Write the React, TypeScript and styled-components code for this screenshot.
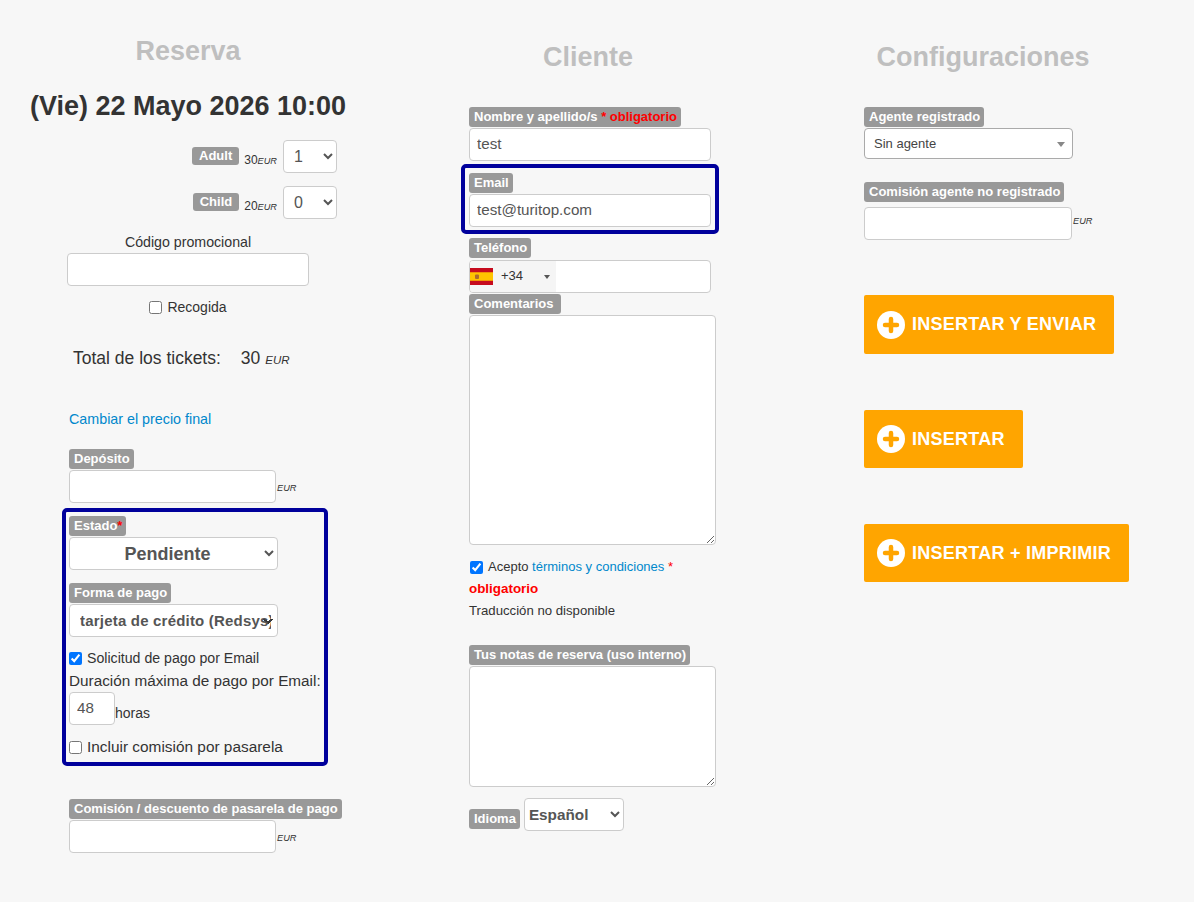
import React from "react"
import styled, { createGlobalStyle } from "styled-components"

const GlobalStyle = createGlobalStyle`
  html, body {
    margin: 0;
    background: #f7f7f7;
    color: #333;
    font-family: "Liberation Sans", Arial, sans-serif;
    font-size: 14px;
  }
  * {
    box-sizing: border-box;
  }
`

const Page = styled.div`
  display: grid;
  grid-template-columns: 400px 395px 376px;
  width: 1194px;
  height: 902px;
  overflow: hidden;
`

const Column = styled.section<{ $top: number }>`
  display: flex;
  flex-direction: column;
  align-items: flex-start;
  padding: ${(p) => p.$top}px 0 0 69px;
  width: 376px;
`

const Title = styled.h2`
  align-self: stretch;
  margin: 0 0 0 -69px;
  font-size: 27px;
  line-height: 31px;
  font-weight: 700;
  text-align: center;
  color: #bfbfbf;
`

const DateTitle = styled.h1`
  align-self: stretch;
  margin: 24px 0 0 -69px;
  font-size: 27px;
  line-height: 31px;
  font-weight: 700;
  text-align: center;
  color: #333;
`

const Label = styled.label<{ $mt?: number; $mb?: number }>`
  display: inline-block;
  margin-top: ${(p) => p.$mt ?? 0}px;
  margin-bottom: ${(p) => p.$mb ?? 0}px;
  padding: 0 4px 0 5px;
  height: 20px;
  line-height: 19px;
  font-size: 13px;
  font-weight: 700;
  white-space: nowrap;
  color: #fff;
  background: #999;
  border-radius: 3px;
`

const Required = styled.span`
  color: #f00;
`

const TextInput = styled.input<{ $w?: number; $mt?: number }>`
  display: block;
  flex: none;
  width: ${(p) => p.$w ?? 242}px;
  height: 33px;
  margin: ${(p) => p.$mt ?? 1}px 0 0;
  padding: 0 7px 2px;
  font-family: inherit;
  font-size: 15.2px;
  color: #555;
  background: #fff;
  border: 1px solid #ccc;
  border-radius: 4px;
  outline: none;
`

const Select = styled.select<{ $w: number; $size?: number; $center?: boolean; $pad?: number }>`
  display: block;
  flex: none;
  width: ${(p) => p.$w}px;
  height: 33px;
  padding: 0 4px 0 ${(p) => p.$pad ?? 4}px;
  font-family: inherit;
  font-size: ${(p) => p.$size ?? 16}px;
  font-weight: ${(p) => (p.$size ? 700 : 400)};
  text-align: ${(p) => (p.$center ? "center" : "left")};
  color: #555;
  background: #fff;
  border: 1px solid #ccc;
  border-radius: 4px;
  outline: none;
`

// text runs under the arrow here, as it does on the real form
const PaymentSelect = styled(Select)`
  appearance: none;
  margin-top: 1px;
  padding: 0 6px 0 10px;
  font-size: 15px;
  letter-spacing: 0.2px;
  background-image:
    linear-gradient(45deg, transparent 45%, #333 45%, #333 70%, transparent 70%),
    linear-gradient(-45deg, transparent 45%, #333 45%, #333 70%, transparent 70%);
  background-repeat: no-repeat;
  background-size: 5px 5px;
  background-position: 193px 14px, 198px 14px;
`

const TicketRow = styled.div<{ $mt: number }>`
  display: flex;
  align-items: flex-start;
  justify-content: flex-end;
  width: 268px;
  margin-top: ${(p) => p.$mt}px;
`

const TicketBadge = styled.span`
  margin-top: 7px;
  padding: 0 7px;
  height: 18px;
  line-height: 17px;
  font-size: 13px;
  font-weight: 700;
  color: #fff;
  background: #999;
  border-radius: 3px;
`

const TicketPrice = styled.span`
  margin: 13px 6px 0 5px;
  font-size: 12px;
  line-height: 15px;
  color: #333;
`

const Unit = styled.i`
  font-size: 9.2px;
  color: #333;
`

const PromoBlock = styled.div`
  display: flex;
  flex-direction: column;
  align-items: center;
  width: 242px;
  margin: 14px 0 0 -2px;
  font-size: 14.2px;
  line-height: 18px;
`

const CheckRow = styled.label<{ $mt?: number; $size?: number; $ml?: number }>`
  display: flex;
  align-items: center;
  margin-top: ${(p) => p.$mt ?? 0}px;
  margin-left: ${(p) => p.$ml ?? 0}px;
  font-size: ${(p) => p.$size ?? 14}px;
  line-height: 18px;
  white-space: nowrap;
  color: #333;

  input {
    width: 13px;
    height: 13px;
    margin: 0 5px 0 0;
  }
`

const Total = styled.div`
  display: flex;
  align-items: baseline;
  margin: 31px 0 0 4px;
  font-size: 17.5px;
  line-height: 22px;
  color: #333;

  b {
    margin-left: 20px;
    font-weight: 400;
  }

  i {
    margin-left: 5px;
    font-size: 11.5px;
  }
`

const Link = styled.a`
  color: #0088cc;
  text-decoration: none;
`

const PriceLink = styled(Link)`
  display: block;
  margin-top: 39px;
  font-size: 14.3px;
  line-height: 18px;
`

const UnitField = styled.div<{ $w: number; $mt?: number; $raise?: number }>`
  display: flex;
  align-items: flex-end;
  margin-top: ${(p) => p.$mt ?? 1}px;

  input {
    width: ${(p) => p.$w}px;
    margin: 0;
  }

  i {
    margin: 0 0 ${(p) => p.$raise ?? 9}px 1px;
    line-height: 12px;
  }
`

const Highlight = styled.div<{ $w: number; $h: number; $mt: number; $x: number }>`
  display: flex;
  flex-direction: column;
  align-items: flex-start;
  flex: none;
  width: ${(p) => p.$w}px;
  height: ${(p) => p.$h}px;
  margin: ${(p) => p.$mt}px 0 0 -${(p) => p.$x}px;
  padding: 4px 0 0 ${(p) => p.$x - 4}px;
  border: 4px solid #00009c;
  border-radius: 5px;
`

const PlainLine = styled.div<{ $mt?: number }>`
  margin-top: ${(p) => p.$mt ?? 0}px;
  font-size: 15.3px;
  line-height: 18px;
  white-space: nowrap;
  color: #333;
`

const HoursRow = styled.div`
  display: flex;
  align-items: flex-end;
  margin-top: 2px;
  font-size: 14px;
  line-height: 18px;

  input {
    width: 46px;
    margin: 0;
  }

  span {
    margin: 0 0 3px 0;
  }
`

const PhoneField = styled.div`
  display: flex;
  align-items: stretch;
  flex: none;
  width: 242px;
  height: 33px;
  margin-top: 2px;
  background: #fff;
  border: 1px solid #ccc;
  border-radius: 4px;
  overflow: hidden;
`

const DialCode = styled.div`
  display: flex;
  align-items: center;
  width: 86px;
  font-size: 13px;
  color: #333;
  background: #f5f5f5;

  svg:first-child {
    flex: none;
    width: 23px;
    height: 17px;
  }

  span {
    margin-left: 8px;
    padding-bottom: 2px;
  }

  svg:last-child {
    width: 6px;
    height: 4px;
    margin-left: 21px;
  }
`

const TextArea = styled.textarea<{ $h: number; $mt?: number }>`
  display: block;
  flex: none;
  width: 247px;
  height: ${(p) => p.$h}px;
  margin: ${(p) => p.$mt ?? 1}px 0 0;
  background: #fff;
  border: 1px solid #ccc;
  border-radius: 4px;
  outline: none;
`

const SmallLine = styled.div<{ $mt: number; $red?: boolean }>`
  margin-top: ${(p) => p.$mt}px;
  font-size: ${(p) => (p.$red ? 13.4 : 13.2)}px;
  line-height: 18px;
  font-weight: ${(p) => (p.$red ? 700 : 400)};
  color: ${(p) => (p.$red ? "#f00" : "#333")};
`

const LanguageRow = styled.div`
  display: flex;
  align-items: flex-end;
  gap: 4px;
  margin-top: 11px;
`

const AgentSelect = styled.div`
  position: relative;
  width: 209px;
  height: 31px;
  margin-top: 1px;
  padding-left: 9px;
  font-size: 13px;
  line-height: 29px;
  color: #444;
  background: #fff;
  border: 1px solid #aaa;
  border-radius: 4px;

  &::after {
    content: "";
    position: absolute;
    top: 13px;
    right: 7px;
    border-style: solid;
    border-width: 5px 4px 0;
    border-color: #888 transparent transparent;
  }
`

const ActionButton = styled.button<{ $w: number; $mt: number; $h: number }>`
  display: flex;
  align-items: center;
  gap: 7px;
  flex: none;
  width: ${(p) => p.$w}px;
  height: ${(p) => p.$h}px;
  margin-top: ${(p) => p.$mt}px;
  padding: 0 0 0 13px;
  font-family: inherit;
  font-size: 18px;
  font-weight: 700;
  letter-spacing: 0.25px;
  white-space: nowrap;
  color: #fff;
  background: #ffa500;
  border: 0;
  border-radius: 2px;
`

const PlusIcon = () => (
  <svg width="28" height="28" viewBox="0 0 28 28">
    <circle cx="14" cy="14" r="14" fill="#fff" />
    <path d="M14 8v12M8 14h12" stroke="#ffa500" strokeWidth="4.5" strokeLinecap="round" />
  </svg>
)

const SpainFlag = () => (
  <svg viewBox="0 0 23 17">
    <rect width="23" height="17" fill="#c60b1e" />
    <rect y="4.25" width="23" height="8.5" fill="#ffc400" />
    <rect x="5" y="6.5" width="4" height="4.5" rx="1" fill="#ad6b2d" />
  </svg>
)

const Caret = () => (
  <svg viewBox="0 0 6 4">
    <path d="M0 0h6L3 4z" fill="#555" />
  </svg>
)

export default function App() {
  return (
    <>
      <GlobalStyle />
      <Page>
        <Column $top={36}>
          <Title>Reserva</Title>
          <DateTitle>(Vie) 22 Mayo 2026 10:00</DateTitle>
          <TicketRow $mt={18}>
            <TicketBadge>Adult</TicketBadge>
            <TicketPrice>
              30<Unit>EUR</Unit>
            </TicketPrice>
            <Select $w={54} $pad={6}>
              <option>1</option>
            </Select>
          </TicketRow>
          <TicketRow $mt={13}>
            <TicketBadge>Child</TicketBadge>
            <TicketPrice>
              20<Unit>EUR</Unit>
            </TicketPrice>
            <Select $w={54} $pad={6}>
              <option>0</option>
            </Select>
          </TicketRow>
          <PromoBlock>
            Código promocional
            <TextInput $mt={2} />
            <CheckRow $mt={12}>
              <input type="checkbox" />
              Recogida
            </CheckRow>
          </PromoBlock>
          <Total>
            Total de los tickets:
            <b>30</b>
            <i>EUR</i>
          </Total>
          <PriceLink href="#">Cambiar el precio final</PriceLink>
          <Label $mt={21}>Depósito</Label>
          <UnitField $w={207}>
            <TextInput />
            <Unit>EUR</Unit>
          </UnitField>
          <Highlight $w={266} $h={258} $mt={5} $x={7}>
            <Label $mb={1}>
              Estado<Required>*</Required>
            </Label>
            <Select $w={209} $size={18} $center>
              <option>Pendiente</option>
            </Select>
            <Label $mt={13}>Forma de pago</Label>
            <PaymentSelect $w={209} $size={15}>
              <option>tarjeta de crédito (Redsys)</option>
            </PaymentSelect>
            <CheckRow $mt={12} $size={14.15}>
              <input type="checkbox" defaultChecked />
              Solicitud de pago por Email
            </CheckRow>
            <PlainLine $mt={5}>Duración máxima de pago por Email:</PlainLine>
            <HoursRow>
              <TextInput defaultValue="48" />
              <span>horas</span>
            </HoursRow>
            <CheckRow $mt={13} $size={15.4}>
              <input type="checkbox" />
              Incluir comisión por pasarela
            </CheckRow>
          </Highlight>
          <Label $mt={33}>Comisión / descuento de pasarela de pago</Label>
          <UnitField $w={207}>
            <TextInput />
            <Unit>EUR</Unit>
          </UnitField>
        </Column>

        <Column $top={42}>
          <Title>Cliente</Title>
          <Label $mt={34}>
            Nombre y apellido/s <Required>* obligatorio</Required>
          </Label>
          <TextInput defaultValue="test" />
          <Highlight $w={258} $h={70} $mt={3} $x={8}>
            <Label $mt={1}>Email</Label>
            <TextInput defaultValue="test@turitop.com" $mt={1} />
          </Highlight>
          <Label $mt={4}>Teléfono</Label>
          <PhoneField>
            <DialCode>
              <SpainFlag />
              <span>+34</span>
              <Caret />
            </DialCode>
          </PhoneField>
          <Label $mt={1}>Comentarios&nbsp;</Label>
          <TextArea $h={230} $mt={1} />
          <CheckRow $mt={13} $size={13} $ml={1}>
            <input type="checkbox" defaultChecked />
            Acepto&nbsp;<Link href="#">términos y condiciones</Link>&nbsp;<Required>*</Required>
          </CheckRow>
          <SmallLine $mt={4} $red>
            obligatorio
          </SmallLine>
          <SmallLine $mt={4}>Traducción no disponible</SmallLine>
          <Label $mt={25}>Tus notas de reserva (uso interno)</Label>
          <TextArea $h={121} />
          <LanguageRow>
            <Label $mb={2}>Idioma</Label>
            <Select $w={100} $size={15.3} $pad={0}>
              <option>Español</option>
            </Select>
          </LanguageRow>
        </Column>

        <Column $top={42}>
          <Title>Configuraciones</Title>
          <Label $mt={34}>Agente registrado</Label>
          <AgentSelect>Sin agente</AgentSelect>
          <Label $mt={23}>Comisión agente no registrado</Label>
          <UnitField $w={208} $mt={5} $raise={13}>
            <TextInput />
            <Unit>EUR</Unit>
          </UnitField>
          <ActionButton $w={250} $h={59} $mt={55}>
            <PlusIcon />
            INSERTAR Y ENVIAR
          </ActionButton>
          <ActionButton $w={159} $h={58} $mt={56}>
            <PlusIcon />
            INSERTAR
          </ActionButton>
          <ActionButton $w={265} $h={58} $mt={56}>
            <PlusIcon />
            INSERTAR + IMPRIMIR
          </ActionButton>
        </Column>
      </Page>
    </>
  )
}
